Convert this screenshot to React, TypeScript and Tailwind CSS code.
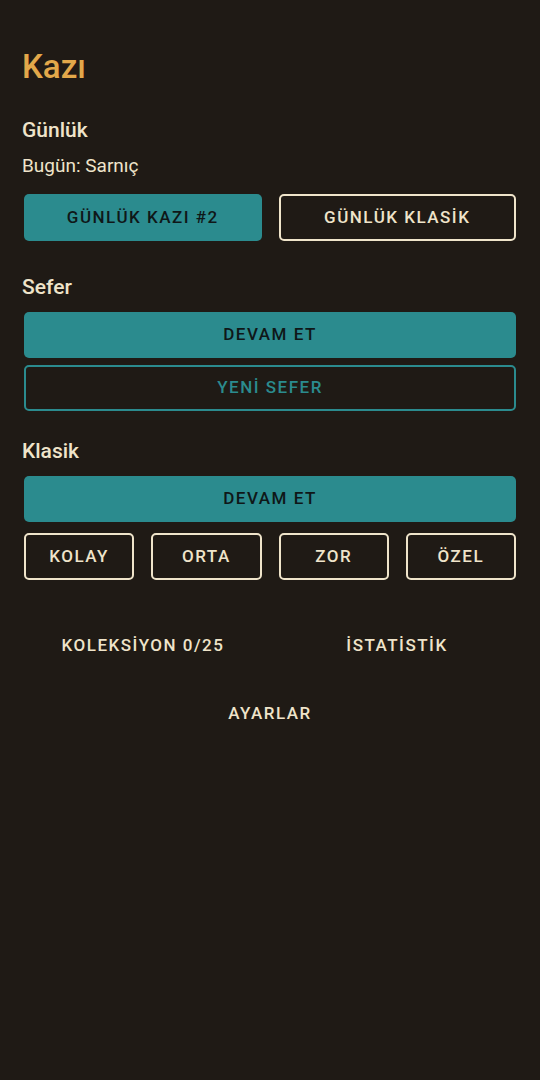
export default function App() {
  const outline =
    "h-[46px] rounded-[5px] border-2 border-[#efe4ca] text-[#efe4ca] text-[17px] font-medium tracking-[1.5px]";
  const filled =
    "h-[46px] rounded-[5px] bg-[#2b8b8e] text-[#0f1718] text-[17px] font-medium tracking-[1.5px]";

  return (
    <div
      className="min-h-[1080px] w-full bg-[#1f1a15] flex flex-col"
      style={{ fontFamily: "Roboto, 'Noto Sans', sans-serif" }}
    >
      <div className="px-[22px] pt-[47px] flex flex-col">
        <h1 className="text-[33px] leading-[40px] font-medium text-[#e2a84a]">Kazı</h1>

        {/* Günlük */}
        <h2 className="mt-[29px] text-[21px] leading-[28px] font-medium text-[#efe4ca]">Günlük</h2>
        <p className="mt-[9px] text-[19px] leading-[26px] text-[#efe4ca]">Bugün: Sarnıç</p>
        <div className="mt-[15px] px-[2px] grid grid-cols-2 gap-[17px]">
          <button className={filled + " h-[47px]"}>GÜNLÜK KAZI #2</button>
          <button className={outline + " h-[47px]"}>GÜNLÜK KLASİK</button>
        </div>

        {/* Sefer */}
        <h2 className="mt-[32px] text-[21px] leading-[28px] font-medium text-[#efe4ca]">Sefer</h2>
        <div className="mt-[11px] px-[2px] flex flex-col gap-[7px]">
          <button className={filled}>DEVAM ET</button>
          <button className="h-[46px] rounded-[5px] border-2 border-[#2b8b8e] text-[#2b8b8e] text-[17px] font-medium tracking-[1.5px]">
            YENİ SEFER
          </button>
        </div>

        {/* Klasik */}
        <h2 className="mt-[26px] text-[21px] leading-[28px] font-medium text-[#efe4ca]">Klasik</h2>
        <div className="mt-[11px] px-[2px] flex flex-col gap-[11px]">
          <button className={filled}>DEVAM ET</button>
          <div className="grid grid-cols-4 gap-[17px]">
            <button className={outline + " h-[47px]"}>KOLAY</button>
            <button className={outline + " h-[47px]"}>ORTA</button>
            <button className={outline + " h-[47px]"}>ZOR</button>
            <button className={outline + " h-[47px]"}>ÖZEL</button>
          </div>
        </div>
      </div>

      {/* Alt menü */}
      <div className="mt-[42px] px-4 grid grid-cols-2">
        <button className="h-12 text-[17px] font-medium tracking-[1.5px] text-[#efe4ca]">KOLEKSİYON 0/25</button>
        <button className="h-12 text-[17px] font-medium tracking-[1.5px] text-[#efe4ca]">İSTATİSTİK</button>
      </div>
      <div className="mt-[20px] flex justify-center">
        <button className="h-12 px-4 text-[17px] font-medium tracking-[1.5px] text-[#efe4ca]">AYARLAR</button>
      </div>
    </div>
  );
}
